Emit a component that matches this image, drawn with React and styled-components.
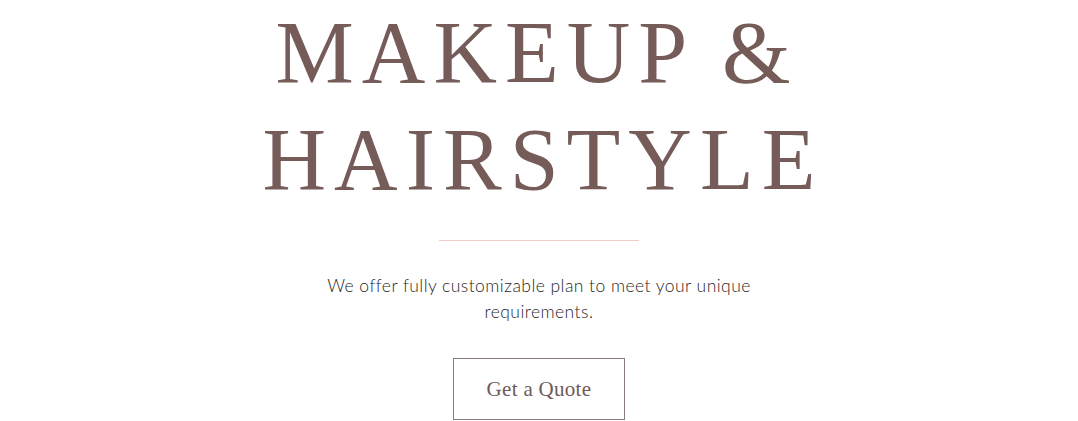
import React from "react";
import styled, { createGlobalStyle } from "styled-components";

const GlobalStyle = createGlobalStyle`
    body {
        margin: 0;
        background: #ffffff;
    }
`;

const Hero = () => {
    return (
        <Wrapper>
            <GlobalStyle />
            <Title>
                <span>MAKEUP &amp;</span>
                <span>HAIRSTYLE</span>
            </Title>
            <Divider />
            <Text>
                We offer fully customizable plan to meet your unique
                <br />
                requirements.
            </Text>
            <QuoteButton type="button">Get a Quote</QuoteButton>
        </Wrapper>
    );
}

const Wrapper = styled.section`
    display: flex;
    flex-direction: column;
    align-items: center;
    width: 1078px;
    height: 421px;
    overflow: hidden;
`;

const Title = styled.h1`
    display: flex;
    flex-direction: column;
    align-items: center;
    margin: -1px 0 0 0;
    font-family: "Liberation Serif", serif;
    font-weight: 400;
    font-size: 88px;
    line-height: 107px;
    letter-spacing: 8px;
    color: #765c58;
    span {
        display: block;
        padding-left: 8px;
    }
    span:first-child {
        padding-left: 0;
        padding-right: 4px;
    }
`;

const Divider = styled.hr`
    width: 200px;
    height: 1px;
    margin: 27px 0 0 0;
    border: none;
    background: #f0cdc7;
`;

const Text = styled.p`
    margin: 32px 0 0 0;
    font-family: "Lato", sans-serif;
    font-weight: 300;
    font-size: 17.5px;
    line-height: 26px;
    letter-spacing: 0.45px;
    text-align: center;
    color: #1f1f1f;
`;

const QuoteButton = styled.button`
    margin-top: 33px;
    width: 172px;
    height: 62px;
    padding: 0;
    background: transparent;
    border: 1px solid #8b7c7a;
    font-family: "Liberation Serif", serif;
    font-size: 21px;
    letter-spacing: 0.3px;
    color: #6f5a57;
    cursor: pointer;
`;

export default Hero;
